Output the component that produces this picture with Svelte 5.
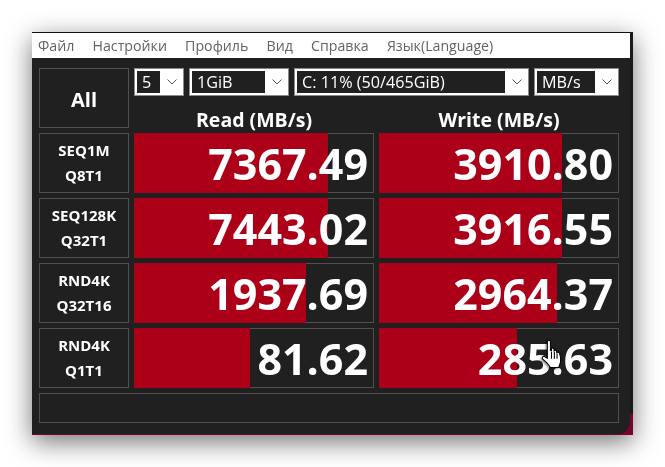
<script>
	const menu = ['Файл', 'Настройки', 'Профиль', 'Вид', 'Справка', 'Язык(Language)'];

	const selects = [
		{ label: '5', width: 50 },
		{ label: '1GiB', width: 100 },
		{ label: 'C: 11% (50/465GiB)', width: 235 },
		{ label: 'MB/s', width: 85 }
	];

	// bar = red width in px, measured inside a 240px cell
	const rows = [
		{ a: 'SEQ1M', b: 'Q8T1', read: '7367.49', readBar: 194, write: '3910.80', writeBar: 183 },
		{ a: 'SEQ128K', b: 'Q32T1', read: '7443.02', readBar: 194, write: '3916.55', writeBar: 183 },
		{ a: 'RND4K', b: 'Q32T16', read: '1937.69', readBar: 172, write: '2964.37', writeBar: 178 },
		{ a: 'RND4K', b: 'Q1T1', read: '81.62', readBar: 116, write: '285.63', writeBar: 138 }
	];
</script>

<div class="page">
	<div class="window">
		<div class="panel">
			<nav class="menu">
				{#each menu as item}
					<span>{item}</span>
				{/each}
			</nav>
			<div class="grid">
				<div class="cell all">All</div>
				<div class="head">
					<div class="selects">
						{#each selects as s}
							<div class="select" style="width: {s.width}px">
								<span class="sel-text">{s.label}</span>
								<span class="arrow">
									<svg width="10" height="6" viewBox="0 0 10 6">
										<path d="M0.5 0.5 L5 5 L9.5 0.5" fill="none" stroke="#555" stroke-width="1" />
									</svg>
								</span>
							</div>
						{/each}
					</div>
					<div class="titles">
						<span>Read (MB/s)</span>
						<span>Write (MB/s)</span>
					</div>
				</div>

				{#each rows as r}
					<div class="cell label">
						<span>{r.a}</span>
						<span>{r.b}</span>
					</div>
					<div class="cell value">
						<div class="bar" style="width: {r.readBar}px"></div>
						<span class="num">{r.read}</span>
					</div>
					<div class="cell value">
						<div class="bar" style="width: {r.writeBar}px"></div>
						<span class="num">{r.write}</span>
					</div>
				{/each}

				<div class="cell status"></div>
			</div>
		</div>

		<svg class="cursor" width="23" height="31" viewBox="0 0 22 30">
			<path
				d="M6.5 1.5 C7.8 0.6 9 1.4 9 3 L9 11 L10 11 L10 9.5 C10.6 8.4 12 8.6 12.4 9.8 L12.6 11.5 C13.2 10.5 14.6 10.7 15 12 L15.2 13.2 C16 12.4 17.4 12.8 17.8 14 C19 16.5 19.2 20 18.6 23 L17 27.5 L9 27.5 C7.5 25 4.5 22 1.5 19.5 C0.5 18 1.8 16.2 3.4 17 L6 18.6 L6 3 C6 2.4 6.1 1.9 6.5 1.5 Z"
				fill="#fff"
				stroke="#000"
				stroke-width="1"
			/>
			<path d="M10 12 V19 M12.8 12.5 V19 M15.4 14 V19" stroke="#000" stroke-width="1" fill="none" />
		</svg>
	</div>
</div>

<style>
	.page {
		width: 665px;
		height: 467px;
		padding: 32px 0 0 32px;
		box-sizing: border-box;
		background: #fff;
		overflow: hidden;
	}

	.window {
		position: relative;
		width: 601px;
		height: 403px;
		background: linear-gradient(#1a1a1a 382px, #7c0030 382px);
		filter: drop-shadow(0 7px 13px rgba(0, 0, 0, 0.55));
	}

	.panel {
		width: 598px;
		height: 402px;
		background: #202020;
		border-top: 1px solid #111;
		box-sizing: border-box;
		border-bottom-right-radius: 12px;
		overflow: hidden;
	}

	.menu {
		height: 25px;
		background: #fff;
		display: flex;
		align-items: center;
		gap: 18.2px;
		padding-left: 6px;
		font: 14.2px "Open Sans", sans-serif;
		color: #636363;
	}

	.grid {
		display: grid;
		grid-template-columns: 90px 240px 240px;
		grid-auto-rows: 60px;
		gap: 5px;
		padding: 10px 0 0 7px;
		color: #fff;
		font-family: "Open Sans", sans-serif;
		font-weight: 700;
	}

	.cell {
		border: 1px solid #505050;
		box-sizing: border-box;
	}

	.all {
		display: flex;
		align-items: center;
		justify-content: center;
		padding-top: 2px;
		font-size: 20px;
	}

	.head {
		grid-column: 2 / 4;
		display: flex;
		flex-direction: column;
	}

	.selects {
		display: flex;
		gap: 5px;
		height: 30px;
	}

	.select {
		display: flex;
		box-sizing: border-box;
		background: #fff;
		border: 1px solid #8a8a8a;
		padding: 2px 0 2px 2px;
		font-weight: 400;
		font-size: 16.2px;
	}

	.sel-text {
		flex: 1;
		background: #202020;
		padding-left: 5px;
		line-height: 22px;
		white-space: nowrap;
		overflow: hidden;
	}

	.arrow {
		width: 23px;
		display: flex;
		align-items: center;
		justify-content: center;
		flex: none;
	}

	.titles {
		display: grid;
		grid-template-columns: 240px 240px;
		gap: 5px;
		flex: 1;
		text-align: center;
		font-size: 19.5px;
		line-height: 26px;
		margin-top: 11px;
	}

	.label {
		display: flex;
		flex-direction: column;
		align-items: center;
		justify-content: center;
		font-size: 15px;
		line-height: 25px;
	}

	.value {
		position: relative;
		display: flex;
		align-items: center;
		justify-content: flex-end;
		padding-right: 5px;
	}

	.bar {
		position: absolute;
		left: -1px;
		top: -1px;
		bottom: -1px;
		background: #ac0018;
	}

	.num {
		position: relative;
		font-size: 43px;
		line-height: 1;
		white-space: nowrap;
	}

	.status {
		grid-column: 1 / 4;
		height: 30px;
	}

	.cursor {
		position: absolute;
		left: 509px;
		top: 307px;
		filter: drop-shadow(-1px 1px 1px rgba(0, 0, 0, 0.5));
	}
</style>
